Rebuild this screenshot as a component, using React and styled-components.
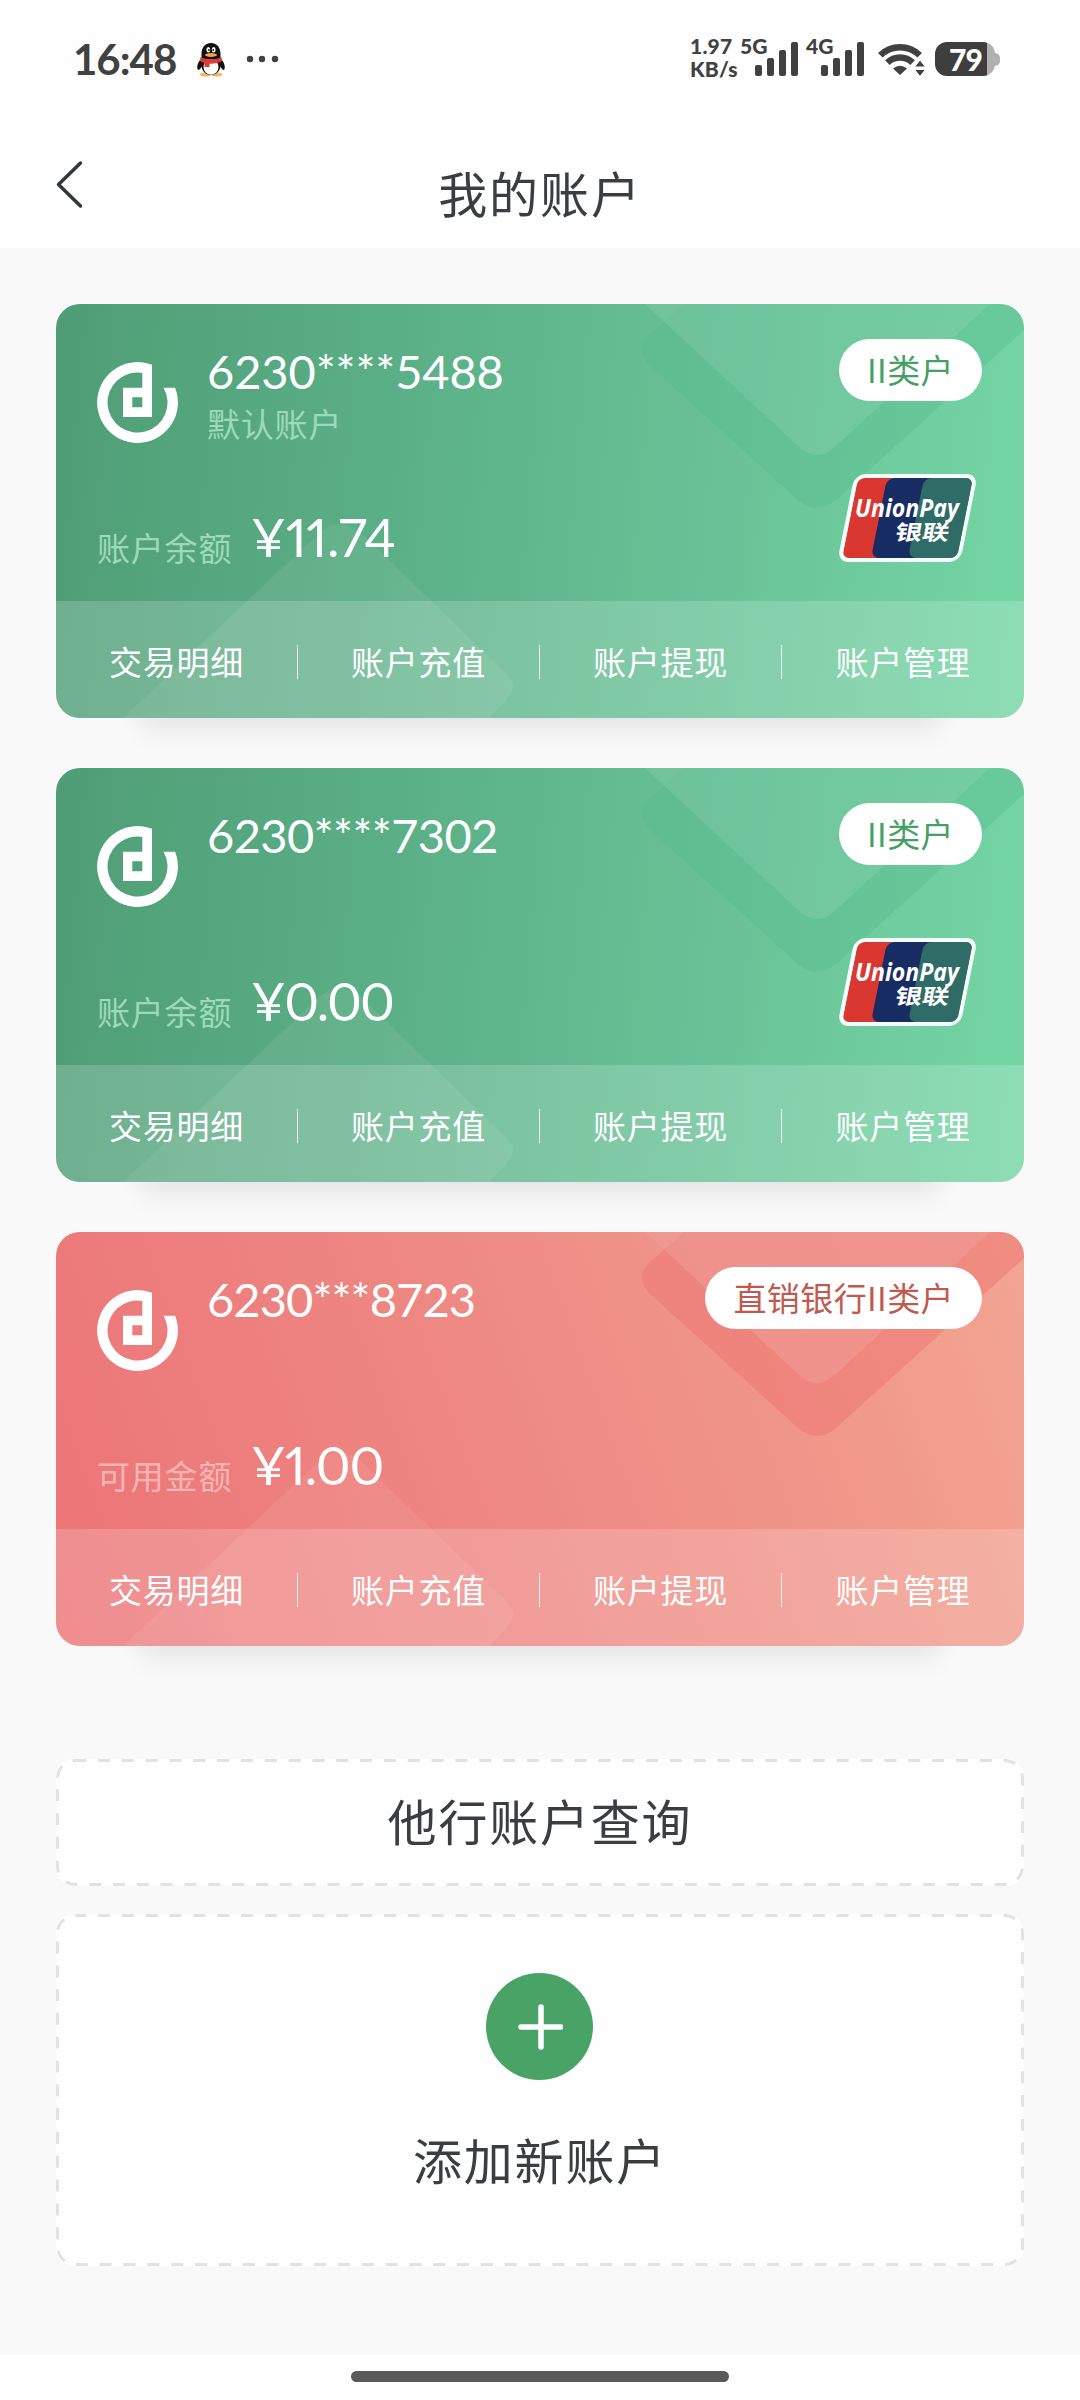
import React from "react";
import styled, { createGlobalStyle } from "styled-components";

const GlobalStyle = createGlobalStyle`
  * {
    box-sizing: border-box;
  }

  body {
    margin: 0;
    background: #f9f9f9;
    font-family: "Lato", "Noto Sans CJK SC", sans-serif;
    color: #3b3e40;
  }
`;

const Screen = styled.div`
  display: flex;
  flex-direction: column;
  width: 1080px;
  height: 2400px;
  overflow: hidden;
`;

const StatusBar = styled.header`
  display: flex;
  align-items: center;
  justify-content: space-between;
  height: 118px;
  padding: 0 80px 0 73px;
  background: #fefefe;
  color: #414141;
`;

const StatusGroup = styled.div`
  display: flex;
  align-items: center;
`;

const Clock = styled.span`
  width: 124px;
  font-size: 42px;
  font-weight: 700;
  line-height: 50px;
  letter-spacing: -1px;
`;

const MoreDots = styled.svg`
  margin-left: 20px;
`;

const NetSpeed = styled.div`
  width: 50px;
  font-size: 21px;
  font-weight: 900;
  line-height: 23px;
  letter-spacing: 0.2px;
  transform: translateY(-2px);
`;

const Signal = styled.div`
  display: flex;
  width: ${(props) => props.$width}px;
  height: 40px;
`;

const SignalLabel = styled.span`
  width: 15px;
  font-size: 21px;
  font-weight: 900;
  line-height: 14px;
`;

const Bars = styled.div`
  display: flex;
  align-items: flex-end;
  gap: 5px;
  height: 37px;
`;

const Bar = styled.i`
  width: 7px;
  height: ${(props) => props.$height}px;
  border-radius: 2px;
  background: #414141;
`;

const Battery = styled.div`
  display: flex;
  align-items: center;
  margin-left: 9px;
`;

const BatteryBody = styled.div`
  width: 60px;
  height: 34px;
  padding-left: 14px;
  border-radius: 12px;
  background: linear-gradient(90deg, #3e3e3e 52px, #b1b1b1 52px);
  color: #fff;
  font-size: 30px;
  font-weight: 900;
  line-height: 34px;
  letter-spacing: -1px;
`;

const BatteryTip = styled.i`
  width: 6px;
  height: 13px;
  margin-left: -1px;
  border-radius: 0 5px 5px 0;
  background: #b1b1b1;
`;

const NavBar = styled.nav`
  display: grid;
  grid-template-columns: 1fr auto 1fr;
  align-items: start;
  height: 130px;
  padding: 0 56px;
  background: #fefefe;
`;

const BackButton = styled.button`
  display: flex;
  width: 40px;
  height: 52px;
  margin-top: 40px;
  padding: 0;
  border: 0;
  background: none;
`;

const Title = styled.h1`
  margin: 0;
  padding-top: 41px;
  font-size: 49px;
  font-weight: 400;
  line-height: 70px;
  letter-spacing: 1.9px;
`;

const Content = styled.main`
  display: flex;
  flex: 1;
  flex-direction: column;
  padding: 56px 56px 0;
`;

const CardList = styled.section`
  display: flex;
  flex-direction: column;
  gap: 50px;
`;

const Card = styled.article`
  position: relative;
  height: 414px;
  border-radius: 24px;
  background: ${(props) => props.$background};
  box-shadow: 0 94px 28px -86px rgba(0, 0, 0, 0.1);
  color: #fff;
`;

const Pattern = styled.svg`
  position: absolute;
  inset: 0;
  border-radius: 24px;
`;

const CardBody = styled.div`
  position: relative;
  display: flex;
  flex-direction: column;
  justify-content: space-between;
  height: 297px;
  padding: 35px 42px 30px 41px;
`;

const CardTop = styled.div`
  display: flex;
  align-items: flex-start;
`;

const BankLogo = styled.svg`
  margin-top: 23px;
`;

const CardInfo = styled.div`
  flex: 1;
  margin-left: 29px;
`;

const CardNumber = styled.div`
  margin-top: 3px;
  font-size: 47px;
  line-height: 58px;
  letter-spacing: ${(props) => props.$spacing}px;
`;

const DefaultTag = styled.div`
  margin-top: 3px;
  color: ${(props) => props.$color};
  font-size: 33px;
  line-height: 42px;
  letter-spacing: 0.8px;
`;

const TypeBadge = styled.span`
  height: 62px;
  padding: 0 28px;
  border-radius: 31px;
  background: #fff;
  color: ${(props) => props.$color};
  font-family: "Noto Sans CJK SC", sans-serif;
  font-size: 33px;
  line-height: 61px;
  letter-spacing: 0.4px;
`;

const CardBottom = styled.div`
  display: flex;
  align-items: flex-end;
  justify-content: space-between;
  height: 98px;
`;

const Balance = styled.div`
  display: flex;
  align-items: baseline;
  margin-bottom: -2px;
`;

const BalanceLabel = styled.span`
  width: 154px;
  color: ${(props) => props.$color};
  font-size: 33px;
  letter-spacing: 0.8px;
`;

const Amount = styled.strong`
  font-size: 53px;
  font-weight: 400;
  font-variant-numeric: proportional-nums;
  line-height: 64px;
  letter-spacing: ${(props) => props.$spacing}px;
  transform: translateY(-4px);
`;

const UnionPayMark = styled.svg`
  align-self: flex-start;
  margin-right: 4px;
`;

const CardActions = styled.div`
  position: relative;
  display: grid;
  grid-template-columns: repeat(4, 1fr);
  align-items: center;
  height: 117px;
  padding-top: 5px;
  border-radius: 0 0 24px 24px;
  background: rgba(255, 255, 255, 0.18);
`;

const CardAction = styled.a`
  height: 34px;
  border-right: 1px solid rgba(255, 255, 255, 0.85);
  font-size: 33px;
  line-height: 34px;
  letter-spacing: 0.8px;
  text-align: center;

  &:last-child {
    border-right: 0;
  }
`;

const DashedBox = styled.section`
  position: relative;
  display: flex;
  flex-direction: column;
  align-items: center;
  height: ${(props) => props.$height}px;
  margin-top: ${(props) => props.$top}px;
  padding-top: ${(props) => props.$padding}px;
  border-radius: 18px;
  background: #fefefe;
`;

const DashedLine = styled.svg`
  position: absolute;
  inset: 0;
`;

const BoxText = styled.span`
  font-size: 49px;
  line-height: 70px;
  letter-spacing: 1.8px;
`;

const AddCircle = styled.div`
  display: flex;
  align-items: center;
  justify-content: center;
  width: 107px;
  height: 107px;
  margin: 0 1px 46px 0;
  border-radius: 50%;
  background: #4aa366;
`;

const HomeArea = styled.footer`
  display: flex;
  justify-content: center;
  height: 45px;
  padding-top: 16px;
  background: #fefefe;
`;

const HomeIndicator = styled.div`
  width: 378px;
  height: 11px;
  border-radius: 6px;
  background: #5a5a5a;
`;

const themes = {
  green: {
    background: "linear-gradient(95deg, #4f9d76 0%, #5cb188 38%, #69c297 68%, #74d6a5 100%)",
    muted: "#9ddab9",
    badge: "#45a066",
    dark: "rgba(84, 186, 141, 0.34)",
    light: "rgba(255, 255, 255, 0.09)",
  },
  red: {
    background: "linear-gradient(70deg, #ec7477 0%, #ee8883 45%, #f09589 72%, #f3a593 100%)",
    muted: "#f6b5b2",
    badge: "#c05a50",
    dark: "rgba(238, 116, 113, 0.5)",
    light: "rgba(240, 160, 154, 0.5)",
  },
};

const accounts = [
  {
    number: "6230****5488",
    numberSpacing: -0.1,
    isDefault: true,
    type: "II类户",
    label: "账户余额",
    amount: "¥11.74",
    amountSpacing: -0.3,
    unionPay: true,
    theme: themes.green,
  },
  {
    number: "6230****7302",
    numberSpacing: -0.6,
    type: "II类户",
    label: "账户余额",
    amount: "¥0.00",
    amountSpacing: -1.8,
    unionPay: true,
    theme: themes.green,
  },
  {
    number: "6230***8723",
    numberSpacing: -0.9,
    type: "直销银行II类户",
    label: "可用金额",
    amount: "¥1.00",
    amountSpacing: -1.1,
    theme: themes.red,
  },
];

const actions = ["交易明细", "账户充值", "账户提现", "账户管理"];

const QQIcon = () => (
  <svg width="28" height="35" viewBox="0 0 28 35">
    <ellipse cx="8.5" cy="32.6" rx="6" ry="2" fill="#f3b765" />
    <ellipse cx="19.5" cy="32.6" rx="6" ry="2" fill="#f3b765" />
    <path d="M4 17C0 21 -0.5 26 1 28c1.500 0 3-2 4-4M24 17c4 4 4.500 9 3 11-1.500 0-3-2-4-4" fill="#111" />
    <path d="M14 1C7.500 1 4.500 6 4.500 12v6c-1.500 8 2 15 9.500 15s11-7 9.500-15v-6C23.500 6 20.500 1 14 1z" fill="#111" />
    <ellipse cx="14" cy="25" rx="7.500" ry="7.800" fill="#fff" />
    <path d="M3.500 15c6 3 15 3 21 0l.5 4c-7 3.500-15 3.500-22 0z" fill="#e03a35" />
    <path d="M7.500 19h5v6h-5z" fill="#e03a35" />
    <ellipse cx="11.300" cy="7.800" rx="1.900" ry="2.700" fill="#fff" />
    <ellipse cx="16.700" cy="7.800" rx="1.900" ry="2.700" fill="#fff" />
    <circle cx="11.900" cy="8" r="0.900" fill="#111" />
    <circle cx="16.200" cy="8" r="0.900" fill="#111" />
    <ellipse cx="14" cy="13" rx="6" ry="1.900" fill="#f2a93b" />
  </svg>
);

const WifiIcon = () => (
  <svg width="49" height="34" viewBox="0 0 49 34" fill="none" stroke="#414141">
    <path d="M3.300 13.300a28 28 0 0 1 39.400 0" strokeWidth="6.500" />
    <path d="M10.400 20.600a18 18 0 0 1 25.200 0" strokeWidth="6.500" />
    <path d="M23 33l-7-6.500q7-5.500 14 0z" fill="#414141" stroke="none" />
    <path d="M43 18l5.500 7h-11zM43 34.500l5.500-7h-11z" fill="#414141" stroke="#fefefe" strokeWidth="1" />
  </svg>
);

const CardPattern = ({ theme }) => (
  <Pattern width="968" height="414" viewBox="0 0 968 414">
    <path
      d="M628 0L592 32Q580 44 592 60L742 196Q761 212 780 196L968 26V0z"
      fill={theme.dark}
    />
    <path d="M589 0L742 142Q761 160 780 142L934 0z" fill={theme.light} />
    <path
      d="M67 414L262 230Q284 210 306 230L452 371Q462 382 452 394L434 414z"
      fill="#fff"
      fillOpacity="0.07"
    />
  </Pattern>
);

const Logo = () => (
  <BankLogo width="81" height="81" viewBox="0 0 81 81">
    <path
      fill="#fff"
      fillRule="evenodd"
      d="M78.100 25.700A40.400 40.400 0 1 1 55 2.800V55H26V25.700H45.300V10.900A30 30 0 1 0 66.600 25.700ZM35.300 35.300v10h10v-10z"
    />
  </BankLogo>
);

const UnionPay = ({ id }) => (
  <UnionPayMark width="142" height="90" viewBox="0 0 142 90">
    <defs>
      <clipPath id={id}>
        <rect x="23" y="5" width="115" height="80" rx="7" />
      </clipPath>
    </defs>
    <g transform="skewX(-11.3)">
      <rect x="19" y="1" width="123" height="88" rx="11" fill="#f4fffb" />
      <g clipPath={`url(#${id})`}>
        <rect x="23" y="5" width="115" height="80" fill="#da3731" />
        <rect x="52" y="5" width="70" height="80" rx="8" fill="#162c63" />
        <rect x="89" y="5" width="70" height="80" rx="8" fill="#2f6b67" />
      </g>
    </g>
    <text
      x="19"
      y="44"
      fill="#fff"
      fontFamily="Noto Sans, sans-serif"
      fontSize="25"
      fontStyle="italic"
      fontWeight="700"
      textLength="104"
      lengthAdjust="spacingAndGlyphs"
    >
      UnionPay
    </text>
    <text
      transform="translate(58 67) skewX(-10)"
      fill="#fff"
      fontFamily="Noto Sans CJK SC, sans-serif"
      fontSize="21"
      fontWeight="700"
      textLength="54"
      lengthAdjust="spacingAndGlyphs"
    >
      银联
    </text>
  </UnionPayMark>
);

const SimSignal = ({ label, width }) => (
  <Signal $width={width}>
    <SignalLabel>{label}</SignalLabel>
    <Bars>
      {[11, 18, 26, 34].map((height) => (
        <Bar key={height} $height={height} />
      ))}
    </Bars>
  </Signal>
);

const Dashes = ({ height }) => (
  <DashedLine width="968" height={height}>
    <rect
      x="1.500"
      y="1.500"
      width="965"
      height={height - 3}
      rx="18"
      fill="none"
      stroke="#e2e2e2"
      strokeWidth="3"
      strokeDasharray="12 11.83"
      strokeDashoffset="-22.500"
    />
  </DashedLine>
);

const AccountCard = ({ account, index }) => {
  const { theme } = account;

  return (
    <Card $background={theme.background}>
      <CardPattern theme={theme} />
      <CardBody>
        <CardTop>
          <Logo />
          <CardInfo>
            <CardNumber $spacing={account.numberSpacing}>{account.number}</CardNumber>
            {account.isDefault && <DefaultTag $color={theme.muted}>默认账户</DefaultTag>}
          </CardInfo>
          <TypeBadge $color={theme.badge}>{account.type}</TypeBadge>
        </CardTop>
        <CardBottom>
          <Balance>
            <BalanceLabel $color={theme.muted}>{account.label}</BalanceLabel>
            <Amount $spacing={account.amountSpacing}>{account.amount}</Amount>
          </Balance>
          {account.unionPay && <UnionPay id={`unionpay-${index}`} />}
        </CardBottom>
      </CardBody>
      <CardActions>
        {actions.map((action) => (
          <CardAction key={action}>{action}</CardAction>
        ))}
      </CardActions>
    </Card>
  );
};

const App = () => {
  return (
    <Screen>
      <GlobalStyle />
      <StatusBar>
        <StatusGroup>
          <Clock>16:48</Clock>
          <QQIcon />
          <MoreDots width="34" height="8" fill="#414141">
            <circle cx="5" cy="4" r="3.200" />
            <circle cx="17" cy="4" r="3.200" />
            <circle cx="30" cy="4" r="3.200" />
          </MoreDots>
        </StatusGroup>
        <StatusGroup>
          <NetSpeed>
            1.97
            <br />
            KB/s
          </NetSpeed>
          <SimSignal label="5G" width={66} />
          <SimSignal label="4G" width={71} />
          <WifiIcon />
          <Battery>
            <BatteryBody>79</BatteryBody>
            <BatteryTip />
          </Battery>
        </StatusGroup>
      </StatusBar>

      <NavBar>
        <BackButton>
          <svg width="28" height="52" fill="none" stroke="#33373c" strokeWidth="3.500" strokeLinecap="round" strokeLinejoin="round">
            <path d="M24.500 5L2.500 26.500L24.500 48" />
          </svg>
        </BackButton>
        <Title>我的账户</Title>
      </NavBar>

      <Content>
        <CardList>
          {accounts.map((account, index) => (
            <AccountCard key={account.number} account={account} index={index} />
          ))}
        </CardList>

        <DashedBox $height={127} $top={113} $padding={28}>
          <Dashes height={127} />
          <BoxText>他行账户查询</BoxText>
        </DashedBox>

        <DashedBox $height={352} $top={28} $padding={59}>
          <Dashes height={352} />
          <AddCircle>
            <svg width="46" height="46" stroke="#fff" strokeWidth="5.500" strokeLinecap="round">
              <path d="M4 23H44M24 3V43" />
            </svg>
          </AddCircle>
          <BoxText>添加新账户</BoxText>
        </DashedBox>
      </Content>

      <HomeArea>
        <HomeIndicator />
      </HomeArea>
    </Screen>
  );
};

export default App;
